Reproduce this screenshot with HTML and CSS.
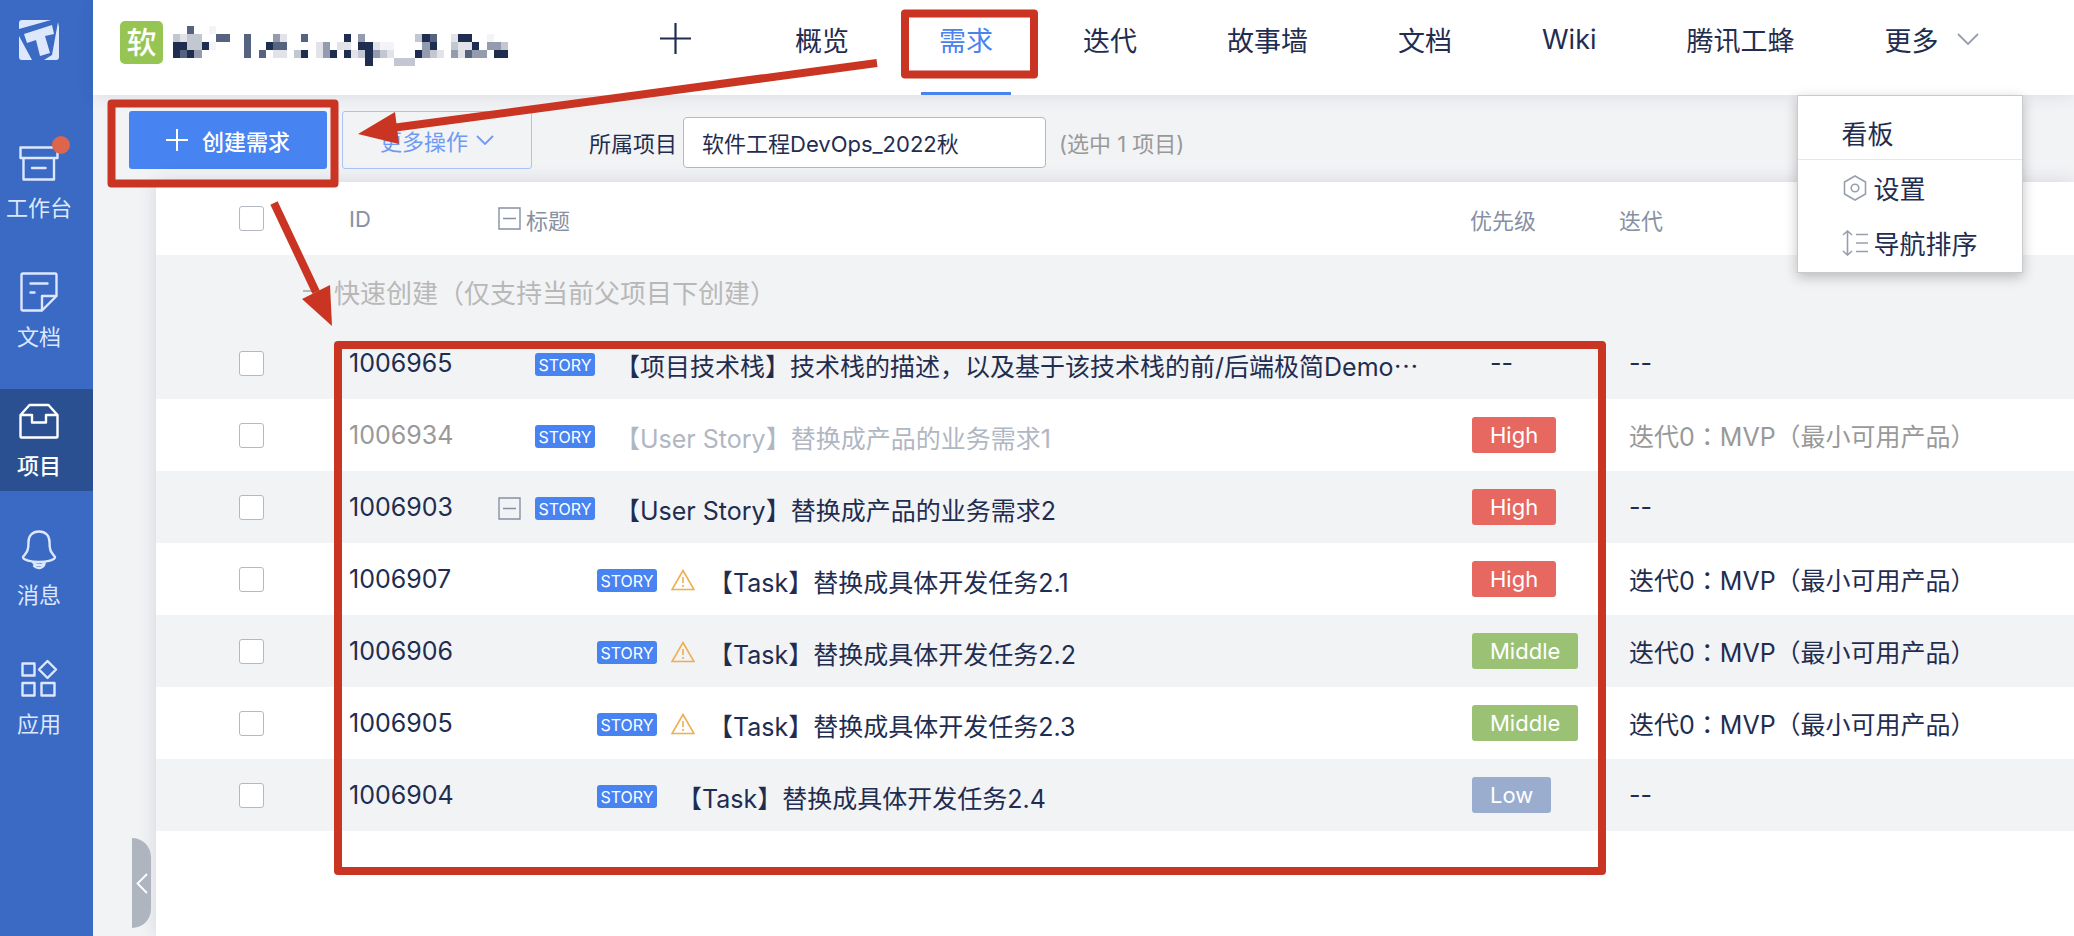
FILE: index.html
```html
<!DOCTYPE html>
<html lang="zh-CN">
<head>
<meta charset="utf-8">
<title>需求 - 软件工程DevOps_2022秋</title>
<link rel="stylesheet" href="styles.css">
</head>
<body>
<aside class="sidebar">
  <a class="logo" href="#" aria-label="TAPD">
    <svg width="40" height="40" viewBox="0 0 40 40"><path fill="#dde8ff" d="M3 0H32L0 9V3Q0 0 3 0ZM0 16L13 40H3Q0 40 0 37ZM39 2L40 7V37Q40 40 37 40H25L33 35ZM5 14L33 5L35 14L26 16L31 33L21 36L17 20L8 23Z"/></svg>
  </a>
  <nav class="side-nav">
    <a class="side-item" href="#">
      <span class="side-icon"><svg width="40" height="40" viewBox="0 0 40 40"><path d="M1.500 4.500H38.500V15H1.500ZM4.500 15V36.500H35V15M13 25H26.500"/></svg><i class="dot"></i></span>
      <span>工作台</span>
    </a>
    <a class="side-item" href="#">
      <span class="side-icon"><svg width="40" height="40" viewBox="0 0 40 40"><path d="M4 1.500H36Q37.500 1.500 37.500 3V24L23 38.500H4Q2.500 38.500 2.500 37V3Q2.500 1.500 4 1.500ZM37.500 24H23V38.500M11.500 11.500H28.500M11.500 20.500H15.500"/></svg></span>
      <span>文档</span>
    </a>
    <a class="side-item side-active" href="#">
      <span class="side-icon"><svg width="40" height="40" viewBox="0 0 40 40"><path d="M1.500 14L10.500 4H29.500L38.500 14V35.500Q38.500 36.500 37.500 36.500H2.500Q1.500 36.500 1.500 35.500ZM1.500 14H13V21.500H27V14H38.500"/></svg></span>
      <span>项目</span>
    </a>
    <a class="side-item" href="#">
      <span class="side-icon"><svg width="40" height="40" viewBox="0 0 40 40"><path d="M20 1.500C13 1.500 9.500 6 9.500 12C9.500 21 8 22 4 27C4 30 12 32 20 32S36 30 36 27C32 22 30.500 21 30.500 12C30.500 6 27 1.500 20 1.500ZM14 32C15 34.500 17 35 20 35C23 35 25.500 34 26 32M15 36C18 39 24 39 25.500 34"/></svg></span>
      <span>消息</span>
    </a>
    <a class="side-item" href="#">
      <span class="side-icon"><svg width="40" height="40" viewBox="0 0 40 40"><path d="M3.500 4.500H15.500V16.500H3.500ZM3.500 24H15.500V36.500H3.500ZM22.500 24H35.500V36.500H22.500ZM28.500 2L37 10.500L28.500 19L20 10.500Z"/></svg></span>
      <span>应用</span>
    </a>
  </nav>
</aside>

<main class="main">
  <header class="header">
    <div class="project">
      <span class="project-badge">软</span>
      <svg class="project-name" viewBox="0 0 47 5" preserveAspectRatio="none" shape-rendering="crispEdges">
        <path fill="#1f2d50" d="M24 1h1v1h-1zM35 1h1v1h-1zM40 1h2v1h-2zM0 2h2v1h-2zM4 2h1v1h-1zM13 2h1v1h-1zM26 2h2v1h-2zM36 2h1v1h-1zM42 2h1v1h-1zM0 3h1v1h-1zM2 3h1v1h-1zM18 3h1v1h-1zM22 3h1v1h-1zM24 3h1v1h-1zM27 3h1v2h-1zM34 3h1v1h-1zM45 3h2v1h-2z"/>
        <path fill="#56637f" d="M2 0h1v1h-1zM6 1h2v1h-2zM10 1h1v3h-1zM18 1h1v1h-1zM36 1h1v1h-1zM14 2h2v1h-2zM1 3h1v1h-1zM12 3h1v1h-1zM41 3h1v1h-1z"/>
        <path fill="#949bae" d="M14 1h1v1h-1zM26 1h1v1h-1zM21 2h1v1h-1zM35 2h1v1h-1zM44 2h2v1h-2zM3 3h1v1h-1zM21 3h1v1h-1zM28 3h1v1h-1zM35 3h1v1h-1zM39 3h1v1h-1zM42 3h2v1h-2z"/>
        <path fill="#c3c7d2" d="M0 1h1v1h-1zM2 1h2v2h-2zM34 1h1v1h-1zM39 2h1v1h-1zM46 2h1v1h-1zM17 3h1v1h-1zM26 3h1v1h-1zM29 3h1v1h-1zM36 3h1v1h-1zM31 4h3v1h-3z"/>
        <path fill="#e1e3e9" d="M1 1h1v1h-1zM15 1h1v1h-1zM39 1h1v1h-1zM20 2h1v1h-1zM23 2h2v1h-2zM28 2h1v1h-1zM40 2h2v1h-2zM14 3h2v1h-2zM20 3h1v1h-1zM25 3h1v1h-1zM30 3h1v1h-1zM37 3h1v1h-1zM40 3h1v1h-1z"/>
        <path fill="#f3f4f7" d="M5 0h1v1h-1zM5 2h1v1h-1zM44 1h1v1h-1zM29 2h2v1h-2z"/>
      </svg>
    </div>
    <button class="add" type="button" aria-label="新建"><svg width="31" height="31" viewBox="0 0 31 31"><path d="M15.500 0V31M0 15.500H31" stroke="#1f2d50" stroke-width="2.200"/></svg></button>
    <nav class="tabs">
      <a class="tab" href="#">概览</a>
      <a class="tab tab-active" href="#">需求</a>
      <a class="tab" href="#">迭代</a>
      <a class="tab" href="#">故事墙</a>
      <a class="tab" href="#">文档</a>
      <a class="tab" href="#">Wiki</a>
      <a class="tab" href="#">腾讯工蜂</a>
      <div class="more">
        <a class="tab" href="#">更多<svg width="22" height="12" viewBox="0 0 22 12"><path d="M1 1L11 11L21 1" fill="none" stroke="#979fae" stroke-width="1.800"/></svg></a>
        <div class="menu">
          <a class="menu-item menu-first" href="#">看板</a>
          <a class="menu-item" href="#"><svg width="26" height="26" viewBox="0 0 26 26"><path d="M13 1L23.500 7V19L13 25L2.500 19V7Z"/><circle cx="13" cy="13" r="3.800"/></svg>设置</a>
          <a class="menu-item" href="#"><svg width="26" height="26" viewBox="0 0 26 26"><path d="M5.500 1V25M1 5L5.500 1L10 5M1 21L5.500 25L10 21M14 4.500H26M14 13H26M14 21.500H26"/></svg>导航排序</a>
        </div>
      </div>
    </nav>
  </header>

  <div class="toolbar">
    <button class="btn btn-primary" type="button"><svg width="22" height="22" viewBox="0 0 22 22"><path d="M11 0V22M0 11H22" stroke="#fff" stroke-width="2"/></svg>创建需求</button>
    <button class="btn btn-outline" type="button">更多操作<svg width="18" height="10" viewBox="0 0 18 10"><path d="M1 1L9 9L17 1" fill="none" stroke="#6f9af3" stroke-width="1.800"/></svg></button>
    <div class="filter">
      <label for="project">所属项目</label>
      <input id="project" type="text" value="软件工程DevOps_2022秋">
      <span class="hint">(选中 1 项目)</span>
    </div>
  </div>

  <div class="content">
    <button class="collapse" type="button" aria-label="收起"><svg width="12" height="21" viewBox="0 0 12 21"><path d="M11 1L1.500 10.500L11 20" fill="none" stroke="#fff" stroke-width="1.800"/></svg></button>
    <div class="panel">
      <table class="stories">
        <colgroup><col class="c-check"><col class="c-id"><col><col class="c-priority"><col class="c-iteration"></colgroup>
        <thead>
          <tr>
            <th class="check"><input type="checkbox" aria-label="全选"></th>
            <th>ID</th>
            <th><div class="th-title"><svg class="fold" width="23" height="23" viewBox="0 0 23 23"><path d="M1 1H22V22H1ZM5 11.500H18"/></svg>标题</div></th>
            <th>优先级</th>
            <th>迭代</th>
          </tr>
        </thead>
        <tbody>
          <tr class="quick">
            <td colspan="5"><button class="quick-create" type="button"><svg width="22" height="22" viewBox="0 0 22 22"><path d="M11 0V22M0 11H22" stroke="#b8b8b8" stroke-width="1.800"/></svg><span>快速创建（仅支持当前父项目下创建）</span></button></td>
          </tr>
          <tr class="odd">
            <td class="check"><input type="checkbox" aria-label="1006965"></td>
            <td>1006965</td>
            <td><div class="title"><span class="slot"></span><span class="tag">STORY</span><a href="#">【项目技术栈】技术栈的描述，以及基于该技术栈的前/后端极简Demo<span class="fw">…</span></a></div></td>
            <td class="prio-none">--</td>
            <td class="iter">--</td>
          </tr>
          <tr class="done">
            <td class="check"><input type="checkbox" aria-label="1006934"></td>
            <td>1006934</td>
            <td><div class="title"><span class="slot"></span><span class="tag">STORY</span><a href="#">【User Story】替换成产品的业务需求1</a></div></td>
            <td class="prio"><span class="level high">High</span></td>
            <td class="iter">迭代0<span class="fw" lang="zh-TW">：</span>MVP（最小可用产品）</td>
          </tr>
          <tr class="odd">
            <td class="check"><input type="checkbox" aria-label="1006903"></td>
            <td>1006903</td>
            <td><div class="title"><span class="slot"><svg class="fold" width="23" height="23" viewBox="0 0 23 23"><path d="M1 1H22V22H1ZM5 11.500H18"/></svg></span><span class="tag">STORY</span><a href="#">【User Story】替换成产品的业务需求2</a></div></td>
            <td class="prio"><span class="level high">High</span></td>
            <td class="iter">--</td>
          </tr>
          <tr>
            <td class="check"><input type="checkbox" aria-label="1006907"></td>
            <td>1006907</td>
            <td><div class="title child"><span class="slot"></span><span class="tag">STORY</span><svg class="warn" width="24" height="22" viewBox="0 0 24 22"><path d="M12 1.500L23 20.500H1ZM12 8V14M12 16V18"/></svg><a href="#">【Task】替换成具体开发任务2.1</a></div></td>
            <td class="prio"><span class="level high">High</span></td>
            <td class="iter">迭代0<span class="fw" lang="zh-TW">：</span>MVP（最小可用产品）</td>
          </tr>
          <tr class="odd">
            <td class="check"><input type="checkbox" aria-label="1006906"></td>
            <td>1006906</td>
            <td><div class="title child"><span class="slot"></span><span class="tag">STORY</span><svg class="warn" width="24" height="22" viewBox="0 0 24 22"><path d="M12 1.500L23 20.500H1ZM12 8V14M12 16V18"/></svg><a href="#">【Task】替换成具体开发任务2.2</a></div></td>
            <td class="prio"><span class="level middle">Middle</span></td>
            <td class="iter">迭代0<span class="fw" lang="zh-TW">：</span>MVP（最小可用产品）</td>
          </tr>
          <tr>
            <td class="check"><input type="checkbox" aria-label="1006905"></td>
            <td>1006905</td>
            <td><div class="title child"><span class="slot"></span><span class="tag">STORY</span><svg class="warn" width="24" height="22" viewBox="0 0 24 22"><path d="M12 1.500L23 20.500H1ZM12 8V14M12 16V18"/></svg><a href="#">【Task】替换成具体开发任务2.3</a></div></td>
            <td class="prio"><span class="level middle">Middle</span></td>
            <td class="iter">迭代0<span class="fw" lang="zh-TW">：</span>MVP（最小可用产品）</td>
          </tr>
          <tr class="odd">
            <td class="check"><input type="checkbox" aria-label="1006904"></td>
            <td>1006904</td>
            <td><div class="title child"><span class="slot"></span><span class="tag">STORY</span><a href="#">【Task】替换成具体开发任务2.4</a></div></td>
            <td class="prio"><span class="level low">Low</span></td>
            <td class="iter">--</td>
          </tr>
        </tbody>
      </table>
    </div>
  </div>
</main>

<svg class="marks" width="1620" height="890" viewBox="0 0 1620 890" aria-hidden="true">
  <g fill="none" stroke="#c93522" stroke-width="8" stroke-linejoin="round">
    <rect x="111.500" y="103.500" width="223" height="80"/>
    <rect x="905" y="13.500" width="129" height="61"/>
    <rect x="338" y="345" width="1264" height="526"/>
    <path d="M877 63L392 128M274 203L316 292"/>
  </g>
  <path fill="#c93522" d="M358 134L395 112L399 144ZM332 326L302 299L330 285Z"/>
</svg>
</body>
</html>
```

FILE: styles.css
```css
* { box-sizing: border-box; }

body {
  position: relative;
  display: flex;
  min-height: 100vh;
  margin: 0;
  background: #f2f3f5;
  color: #1f2d50;
  font-family: Inter, "Noto Sans CJK SC", sans-serif;
  font-size: 25px;
}

a { color: inherit; text-decoration: none; }

button, input { font: inherit; color: inherit; }

button {
  padding: 0;
  border: 0;
  background: none;
  cursor: pointer;
}

svg { flex: none; display: block; }

.fw { font-family: "Noto Sans CJK TC", sans-serif; }

/* Sidebar */

.sidebar {
  flex: none;
  width: 93px;
  background: #3a6ac4;
  color: #dde8ff;
  font-size: 22px;
}

.logo {
  display: block;
  padding: 20px 0 0 19px;
}

.side-nav {
  display: flex;
  flex-direction: column;
  gap: 27px;
  padding-top: 71px;
}

.side-item {
  display: flex;
  flex-direction: column;
  align-items: center;
  gap: 12px;
  padding: 12px 15px 12px 0;
  line-height: 26px;
  white-space: nowrap;
}

.side-active {
  background: #2a5092;
  color: #fff;
  font-weight: 500;
}

.side-icon {
  position: relative;
}

.side-icon path {
  fill: none;
  stroke: currentColor;
  stroke-width: 2.4;
  stroke-linejoin: round;
  stroke-linecap: round;
}

.dot {
  position: absolute;
  top: -7px;
  right: -11px;
  width: 18px;
  height: 18px;
  border-radius: 50%;
  background: #dc654c;
}

/* Header */

.main {
  flex: 1;
  min-width: 0;
  display: flex;
  flex-direction: column;
}

.header {
  position: relative;
  z-index: 2;
  display: flex;
  align-items: flex-start;
  height: 95px;
  padding-left: 27px;
  background: #fff;
  box-shadow: 0 2px 16px rgba(31, 45, 80, 0.1);
}

.project {
  display: flex;
  gap: 10px;
  padding-top: 21px;
}

.project-badge {
  width: 43px;
  height: 43px;
  border-radius: 5px;
  background: #96c553;
  color: #fff;
  font-size: 30px;
  font-weight: 500;
  line-height: 42px;
  text-align: center;
}

.project-name {
  width: 335px;
  height: 40px;
  margin-top: 5px;
}

.add { margin: 23px 86px 0 152px; }

.tabs {
  display: flex;
  gap: 54px;
  font-size: 27px;
}

.tab {
  display: flex;
  align-items: center;
  gap: 18px;
  height: 95px;
  padding: 0 18px 17px;
  white-space: nowrap;
}

.tab-active {
  color: #4a82ee;
  box-shadow: inset 0 -3px #4a82ee;
}

.more { position: relative; }

.menu {
  position: absolute;
  top: 95px;
  left: -70px;
  width: 226px;
  padding: 9px 0 2px;
  border: 1px solid #c8cacd;
  background: #fff;
  box-shadow: 0 4px 12px rgba(0, 0, 0, 0.24);
  font-size: 26px;
}

.menu-item {
  display: flex;
  align-items: center;
  gap: 6px;
  height: 55px;
  padding-left: 44px;
}

.menu-first { border-bottom: 1px solid #e4e6ea; }

.menu-item svg {
  fill: none;
  stroke: #979fae;
  stroke-width: 1.6;
}

/* Toolbar */

.toolbar {
  display: flex;
  gap: 15px;
  padding: 16px 36px 13px;
  font-size: 22px;
}

.btn {
  display: flex;
  align-items: center;
  justify-content: center;
  height: 58px;
  border-radius: 3px;
}

.btn-primary {
  gap: 14px;
  width: 198px;
  background: #4883f2;
  color: #fff;
  font-weight: 500;
}

.btn-outline {
  gap: 8px;
  width: 190px;
  border: 1px solid #a9c3f7;
  color: #6f9af3;
}

.filter {
  display: flex;
  align-items: center;
  gap: 6px;
  padding: 4px 0 0 42px;
}

.filter input {
  width: 363px;
  height: 51px;
  padding: 0 18px;
  border: 1px solid #b3b8c3;
  border-radius: 4px;
  background: #fff;
}

.hint {
  padding-left: 7px;
  color: #999;
}

/* Stories */

.content {
  position: relative;
  flex: 1;
  display: flex;
  padding-left: 63px;
}

.collapse {
  position: absolute;
  left: 39px;
  bottom: 8px;
  display: flex;
  align-items: center;
  justify-content: center;
  width: 19px;
  height: 90px;
  border-radius: 0 19px 19px 0;
  background: #aeb5be;
}

.panel {
  flex: 1;
  min-width: 0;
  background: #fff;
  box-shadow: 0 0 18px rgba(31, 45, 80, 0.14);
}

.stories {
  width: 100%;
  border-collapse: collapse;
  table-layout: fixed;
}

.c-check { width: 193px; }
.c-id { width: 149px; }
.c-priority { width: 149px; }
.c-iteration { width: 455px; }

.stories th {
  height: 73px;
  padding: 0;
  color: #8790a3;
  font-size: 22px;
  font-weight: 400;
  text-align: left;
}

.stories td {
  height: 72px;
  padding: 0;
  white-space: nowrap;
}

.odd, .quick { background: #f2f3f5; }

.stories .check { padding-left: 83px; }

.check input {
  appearance: none;
  display: block;
  width: 25px;
  height: 25px;
  margin: 0;
  border: 1px solid #b3b8c3;
  border-radius: 3px;
  background: #fff;
}

.th-title {
  display: flex;
  align-items: center;
  gap: 5px;
}

.fold {
  fill: none;
  stroke: #8790a3;
  stroke-width: 1.4;
}

.quick-create {
  display: flex;
  align-items: center;
  gap: 9px;
  padding-left: 147px;
  color: #b8b8b8;
  font-size: 26px;
}

.title {
  display: flex;
  align-items: center;
}

.title a {
  padding: 4px 0 0 20px;
}

.child { padding-left: 62px; }

.slot { flex: none; width: 37px; }

.tag {
  width: 60px;
  height: 23px;
  border-radius: 3px;
  background: #4883f2;
  color: #fff;
  font-size: 16px;
  line-height: 24px;
  text-align: center;
}

.tag, .warn, .slot { margin-top: 2px; }

.warn {
  margin-left: 14px;
  margin-right: -7px;
  fill: none;
  stroke: #f0ad4e;
  stroke-width: 1.6;
}

.stories .prio { padding-left: 2px; }
.stories .prio-none { padding-left: 20px; }
.stories .iter { padding-left: 10px; }

.level {
  display: inline-block;
  height: 36px;
  padding: 0 18px;
  border-radius: 3px;
  color: #fff;
  font-size: 22px;
  line-height: 36px;
  vertical-align: middle;
}

.high { background: #e66861; }
.middle { background: #9bc174; }
.low { background: #9aadcf; }

.done { color: #999; }
.done .title { color: #b0b7c3; }
.done .tag { color: #fff; }

.marks {
  position: absolute;
  top: 0;
  left: 0;
  z-index: 3;
  pointer-events: none;
}
```
